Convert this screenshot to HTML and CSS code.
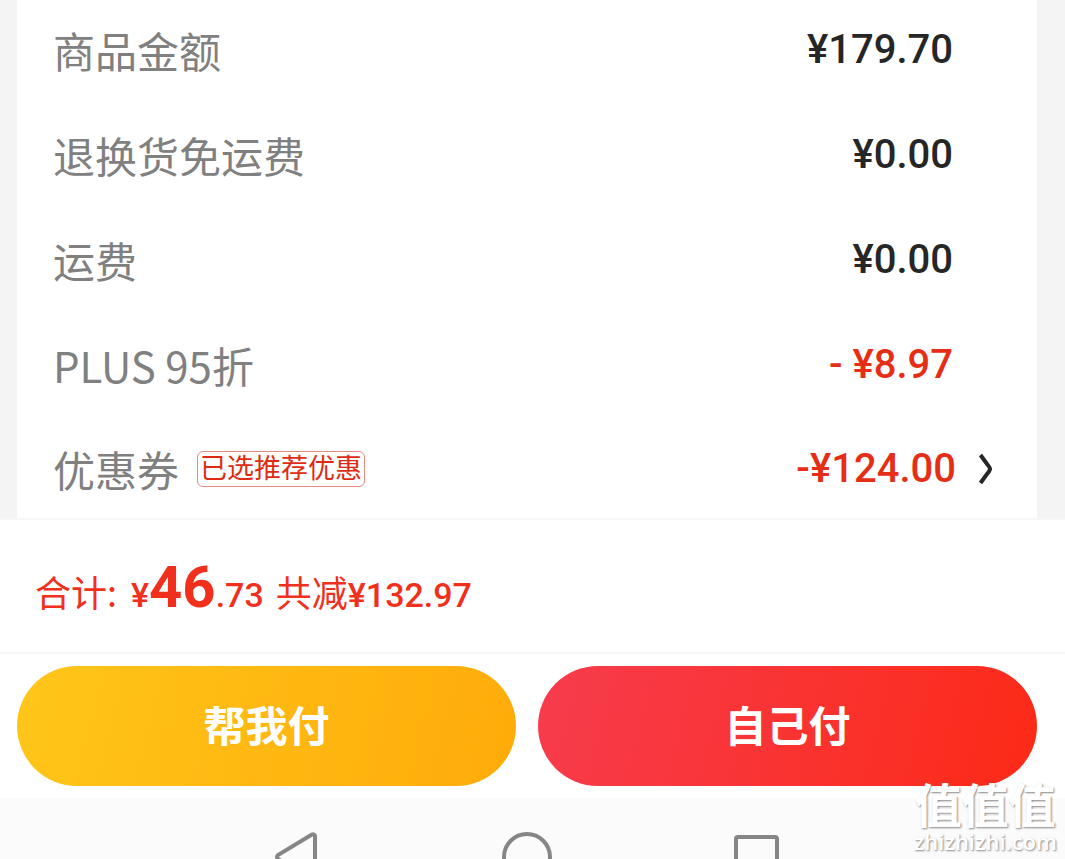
FILE: index.html
```html
<!DOCTYPE html>
<html lang="zh-CN">
<head>
  <meta charset="UTF-8">
  <meta name="viewport" content="width=device-width, initial-scale=1">
  <title>确认订单</title>
  <link rel="stylesheet" href="styles.css">
</head>
<body>
  <div class="page">
    <!-- 金额明细 -->
    <div class="detail">
      <dl class="card">
        <div class="row">
          <dt>商品金额</dt>
          <dd>¥179.70</dd>
        </div>
        <div class="row">
          <dt>退换货免运费</dt>
          <dd>¥0.00</dd>
        </div>
        <div class="row">
          <dt>运费</dt>
          <dd>¥0.00</dd>
        </div>
        <div class="row">
          <dt>PLUS 95折</dt>
          <dd class="minus">- ¥8.97</dd>
        </div>
        <div class="row coupon">
          <dt>优惠券<span class="tag">已选推荐优惠</span></dt>
          <dd class="minus">
            <button class="coupon-btn" type="button">
              -¥124.00
              <svg class="arrow" width="16" height="32" viewBox="0 0 16 32" aria-hidden="true">
                <path d="M2.500 2L9 11q3 3.500 3 5t-3 5L2.500 30" />
              </svg>
            </button>
          </dd>
        </div>
      </dl>
    </div>

    <!-- 合计 -->
    <div class="total">
      <span class="label">合计:</span>
      <span class="price">¥<strong>46</strong>.73</span>
      <span class="saved">共减<span class="num">¥132.97</span></span>
    </div>

    <!-- 支付按钮 -->
    <div class="actions">
      <button class="pay help" type="button">帮我付</button>
      <button class="pay self" type="button">自己付</button>
    </div>

    <!-- 系统导航栏 -->
    <div class="navbar">
      <button type="button" aria-label="返回">
        <svg width="50" height="50" viewBox="0 0 50 50"><path d="M40 2.500a2 2 0 0 1 3 1.500v42a2 2 0 0 1-3 1.500L6 27q-2-2 0-4z" /></svg>
      </button>
      <button type="button" aria-label="主页">
        <svg width="50" height="50" viewBox="0 0 50 50"><circle cx="25" cy="25" r="23" /></svg>
      </button>
      <button type="button" aria-label="最近任务">
        <svg width="50" height="50" viewBox="0 0 50 50"><rect x="4" y="5" width="41" height="41" rx="2" /></svg>
      </button>
    </div>

    <div class="watermark">
      <div class="name">值值值</div>
      <div class="site">zhizhizhi.com</div>
    </div>
  </div>
</body>
</html>
```

FILE: styles.css
```css
* { box-sizing: border-box; margin: 0; padding: 0; }
body {
  font-family: "Noto Sans CJK SC", sans-serif;
  background: #fff;
  color: #262626;
}
button {
  font: inherit;
  color: inherit;
  background: none;
  border: none;
  cursor: pointer;
}
.page {
  position: relative;
  display: flex;
  flex-direction: column;
  height: 100vh;
  overflow: hidden;
}
/* 金额明细 */
.detail {
  padding: 0 28px 0 17px;
  background: #f4f4f4;
  border-bottom: 2px solid #f6f6f6;
}
.card {
  background: #fff;
}
.row {
  display: flex;
  justify-content: space-between;
  align-items: center;
  height: 105px;
  padding: 0 84px 0 36px;
}
.row dt {
  display: flex;
  align-items: center;
  padding-bottom: 6px;
  font-size: 42px;
  line-height: 60px;
  color: #808080;
}
.row dd {
  font-family: Roboto, "Noto Sans CJK SC", sans-serif;
  font-size: 40px;
  line-height: 52px;
  font-weight: 500;
  padding-bottom: 6px;
}
.row .minus {
  color: #e62e17;
}
.row.coupon {
  height: 98px;
  padding-right: 43px;
}
.tag {
  margin-left: 18px;
  padding: 0 2px 4px;
  border: 1px solid #e88a80;
  border-radius: 6px;
  font-size: 27px;
  line-height: 30px;
  color: #de2c14;
}
.coupon-btn {
  display: flex;
  align-items: center;
  gap: 22px;
}
.coupon dt,
.coupon dd {
  padding-bottom: 0;
}
.arrow {
  fill: none;
  stroke: #262626;
  stroke-width: 4;
}
/* 合计 */
.total {
  display: flex;
  align-items: baseline;
  height: 134px;
  padding: 31px 35px 0;
  border-bottom: 2px solid #f6f6f6;
  font-size: 36px;
  line-height: 72px;
  color: #f0301c;
}
.price, .num {
  font-family: Roboto, "Noto Sans CJK SC", sans-serif;
  font-size: 34px;
  font-weight: 500;
}
.price {
  margin: 0 12px 0 14px;
}
.price strong {
  font-size: 58px;
  font-weight: 700;
}
/* 支付按钮 */
.actions {
  display: flex;
  gap: 22px;
  padding: 12px 28px 12px 17px;
}
.pay {
  flex: 1;
  height: 120px;
  padding-bottom: 6px;
  border-radius: 60px;
  font-size: 42px;
  font-weight: 700;
  color: #fff;
}
.help {
  background: linear-gradient(105deg, #ffc61a, #ffab09);
}
.self {
  background: linear-gradient(105deg, #f73c4e, #fc2a16);
}
/* 系统导航栏 */
.navbar {
  flex: 1;
  min-height: 0;
  display: flex;
  justify-content: center;
  align-items: flex-start;
  gap: 180px;
  padding: 34px 28px 0 17px;
  background: #fbfbfb;
  overflow: hidden;
}
.navbar svg {
  display: block;
  fill: none;
  stroke: #868686;
  stroke-width: 4;
}
/* 右下角水印 */
.watermark {
  position: absolute;
  right: 8px;
  bottom: 5px;
  text-align: center;
  color: #fff;
  text-shadow: 1px 1px 2px #888;
  pointer-events: none;
}
.watermark .name {
  font-size: 47px;
  line-height: 50px;
  font-weight: 700;
}
.watermark .site {
  font-family: "Open Sans", sans-serif;
  font-size: 22px;
  line-height: 26px;
  font-weight: 600;
}
```
